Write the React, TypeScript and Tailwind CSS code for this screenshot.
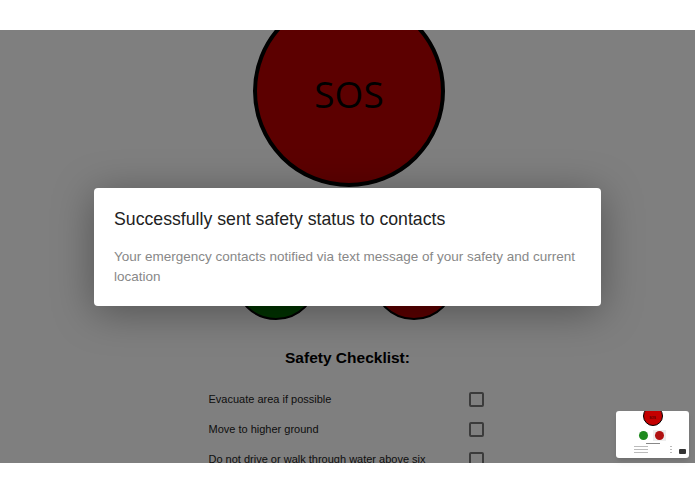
import React from "react";

const checklist = [
  "Evacuate area if possible",
  "Move to higher ground",
  "Do not drive or walk through water above six",
];

const Thumbnail = () => {
  return (
    <div className="absolute left-[616px] top-[411px] w-[73px] h-[47px] bg-white rounded-[3px] shadow-md overflow-hidden flex flex-col items-center">
      <div className="w-[20px] h-[20px] mt-[-5px] rounded-full bg-[#c40000] border border-black flex items-center justify-center">
        <span className="text-[3px] text-black mt-[4px]">SOS</span>
      </div>
      <div className="flex gap-[5px] mt-[4px] items-center">
        <div className="w-[9px] h-[9px] rounded-full bg-[#1f8a1f]" />
        <div className="w-[13px] h-[11px] bg-[#eeeeee] flex items-center justify-center">
          <div className="w-[9px] h-[9px] rounded-full bg-[#b01010]" />
        </div>
      </div>
      <div className="w-[14px] h-[1px] bg-[#888] mt-[2px]" />
      <div className="w-[38px] flex flex-col gap-[2px] mt-[2px]">
        {[0, 1, 2].map((i) => (
          <div key={i} className="flex justify-between">
            <div className="w-[14px] h-[1px] bg-[#bbb]" />
            <div className="w-[2px] h-[1px] bg-[#bbb]" />
          </div>
        ))}
      </div>
      <div className="absolute right-[3px] bottom-[4px] w-[7px] h-[5px] bg-[#333] rounded-[1px]" />
    </div>
  );
};

const App = () => {
  return (
    <div className="relative w-[695px] h-[494px] bg-white overflow-hidden font-['Liberation_Sans',Arial,sans-serif]">
      <div className="h-[30px] bg-white" />
      <div className="relative h-[433px] overflow-hidden">
        <div className="flex flex-col items-center">
          <div className="w-[192px] h-[192px] mt-[-35px] ml-[3px] rounded-full bg-[#b80000] border-[4px] border-black flex items-center justify-center">
            <span className="font-['Open_Sans',sans-serif] text-[37px] text-black mt-[6px]">
              SOS
            </span>
          </div>
          <div className="flex gap-[54px] mt-[49px] ml-[-5px]">
            <div className="w-[84px] h-[84px] rounded-full bg-[#006600] border-[2px] border-black" />
            <div className="w-[84px] h-[84px] rounded-full bg-[#b80000] border-[2px] border-black" />
          </div>
          <h2 className="mt-[26px] text-[15.5px] font-bold text-black">
            Safety Checklist:
          </h2>
          <div className="w-[275px] ml-[-3px] flex flex-col gap-[14px] mt-[22px]">
            {checklist.map((item) => (
              <div key={item} className="flex items-center justify-between h-[16px]">
                <span className="text-[11px] text-[#222]">{item}</span>
                <span className="w-[15px] h-[15px] rounded-[2px] border-[2px] border-[#767676] bg-white" />
              </div>
            ))}
          </div>
        </div>
        <div className="absolute inset-0 bg-black/50" />
        <div className="absolute left-[94px] top-[158px] w-[507px] h-[118px] bg-white rounded-[4px] shadow-[0_6px_40px_rgba(0,0,0,0.35)] pl-[20px] pr-[14px] pt-[20px]">
          <h1 className="text-[17.7px] leading-[22px] text-[#222]">
            Successfully sent safety status to contacts
          </h1>
          <p className="mt-[17px] text-[13.5px] leading-[20px] text-[#888]">
            Your emergency contacts notified via text message of your safety and current location
          </p>
        </div>
      </div>
      <div className="h-[31px] bg-white" />
      <Thumbnail />
    </div>
  );
};

export default App;
